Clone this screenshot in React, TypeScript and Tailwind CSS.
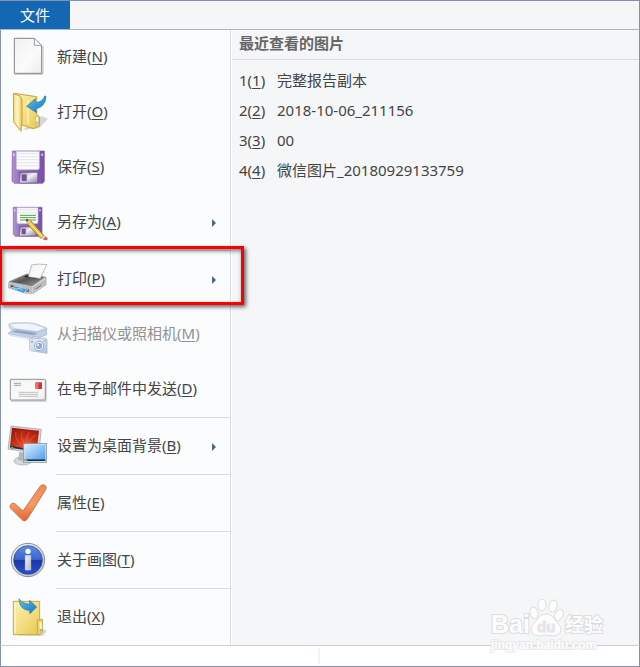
import type { ReactNode } from "react";

function Icon({ viewBox, children }: { viewBox: string; children: ReactNode }) {
  return (
    <svg className="h-[47px] w-11 shrink-0" viewBox={viewBox} aria-hidden="true">
      {children}
    </svg>
  );
}

/* Shared gradients for the menu icons */
function Gradients() {
  return (
    <svg className="absolute h-0 w-0" aria-hidden="true">
      <defs>
        <linearGradient id="paper" x1="0" y1="0" x2="1" y2="1">
          <stop offset="0" stopColor="#f1f1f1" />
          <stop offset="0.6" stopColor="#fbfbfb" />
          <stop offset="1" stopColor="#ececec" />
        </linearGradient>
        <linearGradient id="folder" x1="0" y1="0" x2="1" y2="1">
          <stop offset="0" stopColor="#fdf3b4" />
          <stop offset="1" stopColor="#e9c94f" />
        </linearGradient>
        <linearGradient id="flap" x1="0" y1="0" x2="1" y2="0">
          <stop offset="0" stopColor="#f6da7c" />
          <stop offset="0.5" stopColor="#fff5c4" />
          <stop offset="1" stopColor="#e8c257" />
        </linearGradient>
        <linearGradient id="arrow" x1="0" y1="0" x2="1" y2="1">
          <stop offset="0" stopColor="#5fc0ee" />
          <stop offset="1" stopColor="#1478bd" />
        </linearGradient>
        <linearGradient id="disk" x1="0" y1="0" x2="1" y2="0">
          <stop offset="0" stopColor="#b193d2" />
          <stop offset="0.25" stopColor="#9270bd" />
          <stop offset="1" stopColor="#7850aa" />
        </linearGradient>
        <linearGradient id="metal" x1="0" y1="0" x2="1" y2="1">
          <stop offset="0" stopColor="#8b8494" />
          <stop offset="0.45" stopColor="#f3f2f5" />
          <stop offset="1" stopColor="#8a8297" />
        </linearGradient>
        <linearGradient id="printer" x1="0" y1="0" x2="1" y2="1">
          <stop offset="0" stopColor="#a9a9a9" />
          <stop offset="0.45" stopColor="#555" />
          <stop offset="1" stopColor="#a6a6a6" />
        </linearGradient>
        <linearGradient id="scanner" x1="0" y1="0" x2="1" y2="1">
          <stop offset="0" stopColor="#f2f6fc" />
          <stop offset="1" stopColor="#aebfda" />
        </linearGradient>
        <radialGradient id="flower" cx="0.55" cy="0.75" r="0.8">
          <stop offset="0" stopColor="#ea5f36" />
          <stop offset="0.5" stopColor="#c42a14" />
          <stop offset="1" stopColor="#96180d" />
        </radialGradient>
        <linearGradient id="screen" x1="0" y1="0" x2="1" y2="1">
          <stop offset="0" stopColor="#d9f0ff" />
          <stop offset="1" stopColor="#4b9df2" />
        </linearGradient>
        <linearGradient id="tick" x1="0" y1="0" x2="0" y2="1">
          <stop offset="0" stopColor="#ee8a4e" />
          <stop offset="0.55" stopColor="#f79a62" />
          <stop offset="1" stopColor="#e5622c" />
        </linearGradient>
        <linearGradient id="info" x1="0" y1="0" x2="0" y2="1">
          <stop offset="0" stopColor="#5f8ee8" />
          <stop offset="0.48" stopColor="#3c64cc" />
          <stop offset="0.52" stopColor="#1a37a8" />
          <stop offset="1" stopColor="#2b4fd0" />
        </linearGradient>
        <linearGradient id="ring" x1="0" y1="0" x2="1" y2="1">
          <stop offset="0" stopColor="#f7f7f7" />
          <stop offset="1" stopColor="#b5b8bd" />
        </linearGradient>
      </defs>
    </svg>
  );
}

const NewIcon = () => (
  <Icon viewBox="15 102 132 141">
    <path d="M44 223h82l3-4V138" fill="none" stroke="#cfcfcf" strokeWidth="4" />
    <path d="M43 115h60l22 22v83H43z" fill="url(#paper)" stroke="#858585" strokeWidth="3" strokeLinejoin="round" />
    <path d="M103 115v21h22z" fill="#fff" stroke="#9a9a9a" strokeWidth="3" strokeLinejoin="round" />
  </Icon>
);

const OpenIcon = () => (
  <Icon viewBox="15 267 132 141">
    <path d="M68 390l50-6 26-28-20-8z" fill="#b9bcc2" opacity="0.6" />
    <path d="M42 280l68 10v54l8 6v28l-17 8-38-12z" fill="url(#folder)" stroke="#c9a23a" strokeWidth="3" strokeLinejoin="round" />
    <path d="M84 300v72" stroke="#fff5bd" strokeWidth="7" opacity="0.6" />
    <path d="M107 350v28l9-4v-25z" fill="#fffbe6" stroke="#cfaa45" strokeWidth="2" />
    <path d="M109 366v8l4-2v-9z" fill="#79a9d8" />
    <path d="M40 280l19 8q7 4 7 12v60l-3 34-22-28z" fill="url(#flap)" stroke="#cba13c" strokeWidth="3" strokeLinejoin="round" />
    <path d="M80 319l26-23v12q22-2 28-20l4 1q-1 31-31 38l3 11z" fill="url(#arrow)" stroke="#1b75b3" strokeWidth="2" strokeLinejoin="round" />
  </Icon>
);

const SaveIcon = () => (
  <Icon viewBox="15 12 132 141">
    <path d="M37 33h96v91l-5 6H43l-7-7z" fill="url(#disk)" stroke="#7e5ca8" strokeWidth="2" />
    <path d="M49 34h69v50q0 5-5 5H54q-5 0-5-5z" fill="#fbfbfc" stroke="#c9b7dc" strokeWidth="2" />
    <path d="M51 41h65M51 50h65M51 59h65M51 68h65M51 77h65" stroke="#d8dadd" strokeWidth="2" />
    <path d="M59 97h54v32H59z" fill="url(#metal)" stroke="#6d5190" strokeWidth="2" />
    <path d="M64 102h17v22H64z" fill="#7450a0" stroke="#cfc8da" strokeWidth="2" />
    <path d="M39 41h5v6h-5zM124 41h5v6h-5z" fill="#e6dcf0" />
  </Icon>
);

const SaveAsIcon = () => (
  <Icon viewBox="15 177 132 141">
    <path d="M40 202h86v82l-5 5H46l-6-6z" fill="url(#disk)" stroke="#7e5ca8" strokeWidth="2" />
    <path d="M51 203h63v43q0 5-5 5H56q-5 0-5-5z" fill="#fbfbfc" stroke="#c9b7dc" strokeWidth="2" />
    <path d="M53 210h59M53 218h59" stroke="#d8dadd" strokeWidth="2" />
    <path d="M60 226h48M60 233h48M60 240h48" stroke="#45a83e" strokeWidth="3" />
    <path d="M59 260h50v28H59z" fill="url(#metal)" stroke="#6d5190" strokeWidth="2" />
    <path d="M64 265h14v19H64z" fill="#7450a0" stroke="#cfc8da" strokeWidth="2" />
    <path d="M42 208h4v6h-4zM118 208h4v6h-4z" fill="#e6dcf0" />
    <path d="M79 238l14 5 38 43-9 9-39-42z" fill="#f5c53f" stroke="#765325" strokeWidth="2" strokeLinejoin="round" />
    <path d="M91 251l36 39" stroke="#fff0a0" strokeWidth="3" />
    <path d="M79 238l14 5-10 10z" fill="#eecb9a" />
    <path d="M78 237l7 3-4 5z" fill="#222" />
    <path d="M124 293l9-8 6 6-9 8z" fill="#dfe1e4" stroke="#777" strokeWidth="1" />
    <ellipse cx="137" cy="296" rx="6" ry="5" fill="#cb6253" />
  </Icon>
);

const PrintIcon = () => (
  <Icon viewBox="15 48 132 141">
    <path d="M27 125l53-23 58 10v22l-38 26-24-1-50-15z" fill="#d3d4d4" stroke="#8e8e8e" strokeWidth="2" strokeLinejoin="round" />
    <path d="M31 125l50-22 52 9-37 26z" fill="url(#printer)" stroke="#777" strokeWidth="2" />
    <path d="M82 106l43 7-8 5-47-8z" fill="#222" />
    <path d="M85 110l10-35q18-5 46-1-3 5-6 11l-14 31z" fill="url(#paper)" stroke="#9d9d9d" strokeWidth="2" />
    <path d="M27 127l69 14v19l-70-17z" fill="#bcbebf" />
    <path d="M32 135l54 12v9l-54-12z" fill="#4c5053" />
    <path d="M31 145l17-7 36 10-14 12z" fill="#4f9ad6" stroke="#e9f3fa" strokeWidth="2" />
    <path d="M41 145l11 2 9-3 7 9" fill="none" stroke="#a9d7ef" strokeWidth="3" />
    <path d="M99 142l36-23v13l-36 25z" fill="#b7b8b8" />
    <path d="M107 147l17-11" stroke="#777" strokeWidth="3" />
  </Icon>
);

const ScannerIcon = () => (
  <Icon viewBox="15 213 132 141">
    <path d="M26 254q2-5 14-5 50-2 62 1l37 13q3 3-1 6l-26 10-76-9q-9-3-10-16z" fill="#d3deed" stroke="#a9b8d0" strokeWidth="2" />
    <path d="M32 253q40-3 66 0l34 12-22 8-66-9z" fill="#f1f5fb" />
    <path d="M25 279l18-12 69 9 27-10 1 18-32 13-81-14z" fill="#c3d0e4" stroke="#a3b3cd" strokeWidth="2" />
    <path d="M37 276l12-6 64 9-11 7z" fill="#8fa6c9" />
    <path d="M27 283l80 14v6l-78-15z" fill="#dce5f1" />
    <path d="M89 297l48-3 4 6v40l-49-8-3-5z" fill="url(#scanner)" stroke="#a0b0cb" strokeWidth="2" />
    <path d="M97 294l1-4 14-1 2 4" fill="#dbe4f1" stroke="#a0b0cb" strokeWidth="2" />
    <circle cx="117" cy="318" r="14" fill="#edf3fb" stroke="#9aabc8" strokeWidth="3" />
    <circle cx="117" cy="318" r="8" fill="#92add8" stroke="#7891ba" strokeWidth="2" />
    <circle cx="114" cy="315" r="3" fill="#fff" />
    <path d="M93 302h7v6h-7zM133 300h4v5h-4z" fill="#9eb0cc" />
  </Icon>
);

const MailIcon = () => (
  <Icon viewBox="15 18 132 141">
    <path d="M33 123h105V61" fill="none" stroke="#c9c9c9" strokeWidth="4" />
    <rect x="31" y="58" width="105" height="62" rx="2" fill="url(#paper)" stroke="#939393" strokeWidth="3" />
    <path d="M42 70h21M42 76h21" stroke="#777" strokeWidth="2" />
    <path d="M106 67h20v20h-20z" fill="#d93434" />
    <path d="M106 67h9v20h-9z" fill="#ee7169" />
    <path d="M56 97h58M56 103h58M56 109h58" stroke="#a3a3a3" strokeWidth="2" />
  </Icon>
);

const WallpaperIcon = () => (
  <Icon viewBox="15 189 132 141">
    <ellipse cx="68" cy="303" rx="26" ry="12" fill="#d6d7d8" stroke="#a5a6a8" strokeWidth="2" />
    <path d="M58 275l26 5-4 24-26-4z" fill="#b4b6b8" />
    <path d="M33 198l91 10-8 72-92-13z" fill="#d5d6d8" stroke="#97999c" strokeWidth="2" strokeLinejoin="round" />
    <path d="M36 203l81 9-7 60-80-11z" fill="url(#flower)" />
    <path d="M82 265Q44 250 47 216M82 265Q57 232 67 213M82 265Q77 228 88 216M82 265q7-36 27-38M82 265q-29-2-44-19" stroke="#ff7b50" strokeWidth="3" opacity="0.45" fill="none" />
    <path d="M30 258l81 12v5l-81-12z" fill="#1f3047" />
    <circle cx="36" cy="264" r="4" fill="#61b34a" />
    <rect x="70" y="250" width="70" height="57" fill="#d7e0e8" stroke="#748ba2" strokeWidth="2" />
    <path d="M74 254h62v45H74z" fill="url(#screen)" />
    <path d="M74 298h62v5H74z" fill="#18314c" />
    <circle cx="78" cy="300" r="4" fill="#6fbd4b" />
  </Icon>
);

const PropertiesIcon = () => (
  <Icon viewBox="15 30 132 141">
    <path
      d="M31 105q6-10 15-3l23 21 53-76q6-5 13-1 6 5 2 13L82 147q-8 11-17 1L32 115q-3-5-1-10z"
      fill="url(#tick)"
      stroke="#bd7b5c"
      strokeWidth="3"
      strokeLinejoin="round"
    />
  </Icon>
);

const AboutIcon = () => (
  <Icon viewBox="15 201 132 141">
    <circle cx="84" cy="270" r="50" fill="url(#ring)" stroke="#8c8f94" strokeWidth="3" />
    <circle cx="84" cy="270" r="43" fill="url(#info)" stroke="#294084" strokeWidth="2" />
    <circle cx="84" cy="244" r="8" fill="#fff" />
    <path d="M76 257h16v43H76z" fill="url(#ring)" stroke="#dfe5f5" strokeWidth="2" />
  </Icon>
);

const ExitIcon = () => (
  <Icon viewBox="15 42 132 141">
    <path d="M50 167h80l10-15-12-6z" fill="#b9bcc2" opacity="0.6" />
    <path d="M40 64h79v100H40z" fill="url(#folder)" stroke="#cba640" strokeWidth="3" strokeLinejoin="round" />
    <path d="M45 68v92" stroke="#fff8ca" strokeWidth="4" />
    <path d="M112 121l15-3v38l-6 8h-9z" fill="#efd267" stroke="#cba640" strokeWidth="3" strokeLinejoin="round" />
    <path d="M119 127h6v25h-6z" fill="#fffbe6" />
    <path d="M119 147h6v6h-6z" fill="#7eaad9" />
    <path d="M57 56q8 13 31 17l1-12 21 20-20 20-2-10Q58 90 57 56z" fill="url(#arrow)" stroke="#2f7fae" strokeWidth="2" strokeLinejoin="round" />
  </Icon>
);

type Item = {
  label: string;
  accessKey: string;
  icon: ReactNode;
  submenu?: boolean;
  disabled?: boolean;
  marked?: boolean;
  divider?: boolean;
};

const items: Item[] = [
  { label: "新建", accessKey: "N", icon: <NewIcon /> },
  { label: "打开", accessKey: "O", icon: <OpenIcon /> },
  { label: "保存", accessKey: "S", icon: <SaveIcon /> },
  { label: "另存为", accessKey: "A", icon: <SaveAsIcon />, submenu: true, divider: true },
  { label: "打印", accessKey: "P", icon: <PrintIcon />, submenu: true, marked: true },
  { label: "从扫描仪或照相机", accessKey: "M", icon: <ScannerIcon />, disabled: true },
  { label: "在电子邮件中发送", accessKey: "D", icon: <MailIcon />, divider: true },
  { label: "设置为桌面背景", accessKey: "B", icon: <WallpaperIcon />, submenu: true, divider: true },
  { label: "属性", accessKey: "E", icon: <PropertiesIcon />, divider: true },
  { label: "关于画图", accessKey: "T", icon: <AboutIcon />, divider: true },
  { label: "退出", accessKey: "X", icon: <ExitIcon /> },
];

const recent = ["完整报告副本", "2018-10-06_211156", "00", "微信图片_20180929133759"];

function MenuItem({ item }: { item: Item }) {
  return (
    <li className="relative">
      <button
        type="button"
        disabled={item.disabled}
        className="flex h-[55px] w-full items-center gap-2 pl-1 pr-[13px] text-left text-[#444] disabled:text-[#919191]"
      >
        {item.icon}
        <span className="grow whitespace-nowrap pb-[3px]">
          {item.label}(<u className="underline-offset-2">{item.accessKey}</u>)
        </span>
        {item.submenu && (
          <svg className="h-2 w-1.5 shrink-0" viewBox="0 0 6 8" aria-hidden="true">
            <path d="M1 0l4 4-4 4z" fill="#48658c" />
          </svg>
        )}
      </button>
      {item.divider && <div className="ml-[55px] h-0.5 border-t border-[#d9dbde]" />}
      {/* Red callout frame */}
      {item.marked && (
        <div className="pointer-events-none absolute -left-0.5 -right-3.5 -top-1.5 bottom-0.5 z-10 border-[3px] border-[#fb0000] shadow-[2px_2px_4px_rgba(0,0,0,0.6),inset_1px_2px_4px_rgba(0,0,0,0.5)]" />
      )}
    </li>
  );
}

function Watermark() {
  return (
    <svg className="pointer-events-none absolute bottom-3 right-8 h-14 w-[120px]" viewBox="0 0 120 56" aria-hidden="true">
      <g fill="#fdfdfd" stroke="#dcdddf" strokeWidth="1">
        <ellipse cx="46" cy="14" rx="4" ry="6" transform="rotate(-15 46 14)" />
        <ellipse cx="54" cy="6" rx="4" ry="6" />
        <ellipse cx="65" cy="7" rx="4" ry="6" transform="rotate(15 65 7)" />
        <ellipse cx="71" cy="16" rx="4" ry="6" transform="rotate(25 71 16)" />
        <path d="M58 15q6 0 9 6 6 5 6 9 0 7-9 7-6-2-12 0-9 0-9-7 0-4 6-9 3-6 9-6z" />
      </g>
      <g
        fontFamily="'Liberation Sans', 'Noto Sans CJK SC', sans-serif"
        fontWeight="bold"
        fill="#fdfdfd"
        stroke="#dcdddf"
        strokeWidth="2"
        paintOrder="stroke"
      >
        <text x="3" y="34" fontSize="25">Bai</text>
        <text x="49" y="33" fontSize="15" fill="#e2e3e5" stroke="#f2f3f4">du</text>
        <text x="77" y="33" fontSize="19">经验</text>
        <text x="3" y="50" fontSize="12" stroke="#e8e9eb">jingyan.baidu.com</text>
      </g>
    </svg>
  );
}

export default function App() {
  return (
    <div className="relative flex min-h-screen flex-col overflow-hidden bg-[#f5f6f8] text-[15px] leading-5 text-[#444] [font-family:'Noto_Sans','Noto_Sans_CJK_SC',sans-serif]">
      <Gradients />

      {/* Ribbon tab strip */}
      <header className="flex h-[30px] border-b border-r border-t border-b-[#a8b7c7] border-r-[#8391aa] border-t-[#8391aa]">
        <button type="button" className="w-[70px] bg-[#1468b3] text-white">
          文件
        </button>
      </header>

      <main className="flex grow border-x border-[#8391aa]">
        <nav className="w-[230px] shrink-0 border-r border-[#d9dbde] bg-[#fbfcfe]">
          <ul>
            {items.map((item) => (
              <MenuItem key={item.accessKey} item={item} />
            ))}
          </ul>
        </nav>

        {/* Recent pictures */}
        <section className="grow border-l border-white">
          <h2 className="h-[30px] border-b border-[#d9dbde] pl-[7px] pt-[3px] font-bold text-[#666]">最近查看的图片</h2>
          <ol className="pt-[5px]">
            {recent.map((name, i) => (
              <li key={name}>
                <a href="#" className="flex h-[30px] items-center pl-[7px]">
                  <span className="w-[38px]">
                    {i + 1}(<u className="underline-offset-2">{i + 1}</u>)
                  </span>
                  {name}
                </a>
              </li>
            ))}
          </ol>
        </section>
      </main>

      {/* Status bar */}
      <footer className="flex h-[22px] border border-[#8391aa] border-t-[#c9d0dc] bg-white py-0.5">
        <div className="w-1/2 border-r-2 border-[#f3f4f6]" />
      </footer>

      <Watermark />
    </div>
  );
}
